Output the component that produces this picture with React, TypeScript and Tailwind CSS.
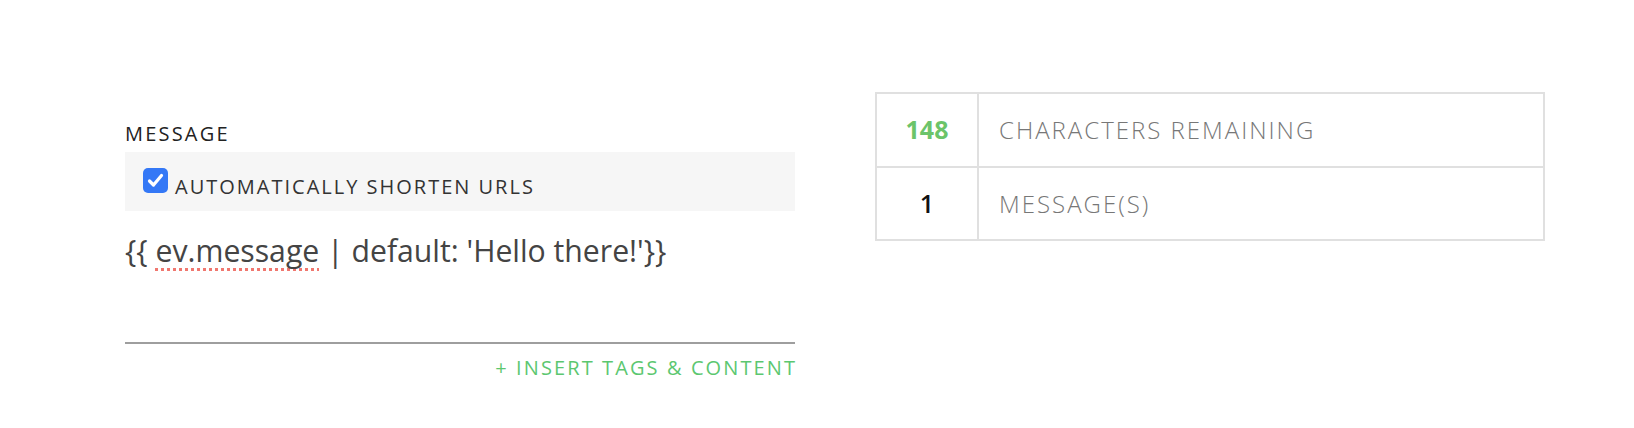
import React from "react";

function CheckIcon() {
  return (
    <div className="w-[25px] h-[25px] rounded-[5px] bg-[#3478f6] flex items-center justify-center shrink-0">
      <svg width="17" height="15" viewBox="0 0 17 15" fill="none">
        <path d="M2.5 8 L6.5 12 L14.5 2.5" stroke="white" strokeWidth="3.2" strokeLinecap="round" strokeLinejoin="round" />
      </svg>
    </div>
  );
}

export default function App() {
  return (
    <div
      className="w-full h-[428px] bg-white flex pl-[125px] pt-[92px] gap-[80px]"
      style={{ fontFamily: '"Open Sans", "Liberation Sans", sans-serif' }}
    >
      <div className="w-[670px] flex flex-col">
        <div className="mt-[32px] h-[20px] leading-[20px] text-[20px] tracking-[2.2px] text-[#222]">MESSAGE</div>
        <div className="mt-[8px] h-[59px] bg-[#f6f6f6] flex items-start pl-[18px] pt-[16px] gap-[7px]">
          <CheckIcon />
          <span className="text-[20px] leading-[25px] tracking-[2px] text-[#333] pt-[6px]">AUTOMATICALLY SHORTEN URLS</span>
        </div>
        <div className="mt-[20px] h-[40px] leading-[40px] text-[30.2px] text-[#444] whitespace-nowrap">
          {"{{ "}
          <span className="underline decoration-dotted decoration-[#f0776f] decoration-[3px] underline-offset-[6px] [text-decoration-skip-ink:none]">ev.message</span>
          {" | default: 'Hello there!'}}"}
        </div>
        <div className="mt-[71px] h-[2px] bg-[#9e9e9e]" />
        <div className="mt-[12px] text-right h-[24px] leading-[24px] text-[20px] tracking-[2.1px] text-[#5cc770] mr-[-2px]">
          + INSERT TAGS &amp; CONTENT
        </div>
      </div>
      <div className="w-[670px] h-[149px] border-2 border-[#e0e0e0] flex flex-col">
        <div className="flex h-[74px] border-b-2 border-[#e0e0e0]">
          <div className="w-[102px] border-r-2 border-[#e0e0e0] flex items-center justify-center text-[25px] font-bold text-[#6cc46a]">148</div>
          <div className="flex items-center pl-[20px] text-[24px] font-light tracking-[2px] text-[#777]">CHARACTERS REMAINING</div>
        </div>
        <div className="flex h-[71px]">
          <div className="w-[102px] border-r-2 border-[#e0e0e0] flex items-center justify-center text-[25px] font-semibold text-[#111]">1</div>
          <div className="flex items-center pl-[20px] text-[24px] font-light tracking-[2px] text-[#777]">MESSAGE(S)</div>
        </div>
      </div>
    </div>
  );
}
